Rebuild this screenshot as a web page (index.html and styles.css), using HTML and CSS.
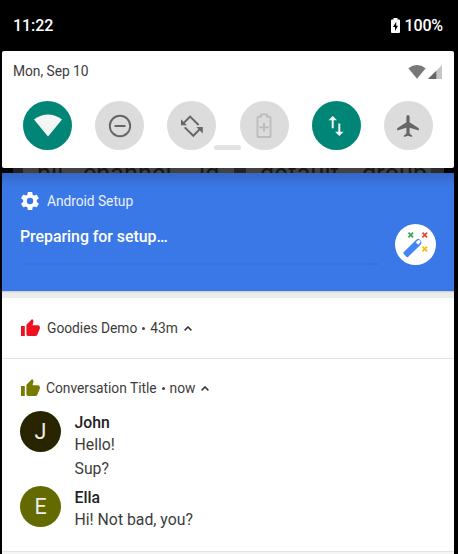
FILE: index.html
```html
<!DOCTYPE html>
<html lang="en">
<head>
<meta charset="utf-8">
<title>Notifications</title>
<link rel="stylesheet" href="styles.css">
</head>
<body>
<header class="status">
  <span class="clock">11:22</span>
  <span class="battery">
    <svg width="9" height="15" viewBox="0 0 9 15"><path fill="#fff" fill-rule="evenodd" d="M2.500 0h4v1.500H8q1 0 1 1V14q0 1-1 1H1q-1 0-1-1V2.500q0-1 1-1h1.500zM5.200 3.800 2 9h2v4l3-5.300H5.200z"/></svg>
    <span>100%</span>
  </span>
</header>
<section class="quick">
  <div class="quick-head">
    <span class="date">Mon, Sep 10</span>
    <span class="signals">
      <svg width="18" height="14" viewBox="0 0 18 14"><path fill="#777" d="M.3 3.300Q9-3.200 17.700 3.300L9 13.700z"/></svg>
      <svg width="14" height="14" viewBox="0 0 14 14"><path fill="#c6c6c6" d="M14 0v14H0z"/><path fill="#666" d="M8.300 5.700V14H0z"/></svg>
    </span>
  </div>
  <div class="tiles">
    <div class="tile on"><svg width="28" height="23" viewBox="0 0 28 23"><path fill="#f5f5f5" d="M0 5.500Q14-4.500 28 5.500L14 22.500z"/></svg></div>
    <div class="tile"><svg width="24" height="24" viewBox="0 0 24 24"><circle cx="12" cy="12" r="10.200" fill="none" stroke="#666" stroke-width="1.900"/><path fill="#666" d="M6.500 11h11v2h-11z"/></svg></div>
    <div class="tile"><svg width="24" height="24" viewBox="0 0 24 24"><g fill="none" stroke="#666" stroke-width="2"><path d="M18.600 11 10.100 2.600 3.800 8.900M4.700 13.400l8.600 8.400 6.500-6.700"/></g><path fill="#666" d="M1 5.200v6h6zM22.800 19.500v-6.500h-6.500z"/></svg></div>
    <div class="tile dim"><svg width="16" height="26" viewBox="0 0 16 26"><path fill="none" stroke="#bdbdbd" stroke-width="1.900" d="M5 1.500h6v2.200h2.500q1 0 1 1V23q0 1-1 1h-11q-1 0-1-1V4.700q0-1 1-1H5z"/><path fill="#bdbdbd" d="M7 9.800h2v3.500h3.500v2H9v3.400H7v-3.400H3.500v-2H7z"/></svg></div>
    <div class="tile on"><svg width="16" height="20" viewBox="0 0 16 20"><path fill="#f5f5f5" d="M4.700 0 9 4.300H5.700v7.900h-2V4.300H.5zM10.300 7.500h2v8.200h3.300L11.300 20 7 15.700h3.300z"/></svg></div>
    <div class="tile"><svg width="24" height="24" viewBox="0 0 24 24"><path fill="#666" d="M10.400 8.300V2.700a1.600 1.600 0 0 1 3.200 0v5.600l9.200 6v2.200l-9.200-2.800v5.800l2.500 1.900V23L12 21.800 7.900 23v-1.600l2.500-1.900v-5.800l-9.200 2.800v-2.200z"/></svg></div>
  </div>
  <div class="handle"></div>
</section>
<div class="peek"><span>nll_</span><span>channel_</span><span>id</span><span>default_</span><span>group</span></div>
<section class="setup">
  <div class="setup-text">
    <div class="setup-app"><svg width="20" height="20" viewBox="1 1 22 22"><path fill="#fff" d="M19.430 12.980c.04-.32.070-.64.070-.98s-.03-.66-.070-.98l2.110-1.650c.19-.15.240-.42.120-.64l-2-3.460c-.12-.22-.39-.3-.61-.22l-2.490 1c-.52-.4-1.080-.73-1.690-.98l-.38-2.650C14.460 2.180 14.250 2 14 2h-4c-.25 0-.46.180-.49.420l-.38 2.650c-.61.250-1.170.59-1.690.98l-2.490-1c-.23-.09-.49 0-.61.220l-2 3.460c-.13.220-.07.49.120.64l2.110 1.650c-.04.320-.07.650-.07.980s.03.660.070.980l-2.110 1.650c-.19.150-.24.420-.12.640l2 3.460c.12.220.39.3.61.220l2.490-1c.52.4 1.080.73 1.690.98l.38 2.650c.03.240.24.420.49.420h4c.25 0 .46-.18.490-.42l.38-2.650c.61-.25 1.170-.59 1.690-.98l2.490 1c.23.090.49 0 .61-.22l2-3.460c.12-.22.070-.49-.12-.64zM12 15.500A3.500 3.500 0 1 1 12 8.500a3.500 3.500 0 0 1 0 7z"/></svg><span>Android Setup</span></div>
    <div class="setup-title">Preparing for setup…</div>
    <div class="progress"><i></i></div>
  </div>
  <div class="wand"><svg width="41" height="41" viewBox="0 0 41 41"><path fill="#4285f4" fill-rule="evenodd" d="M8.600 28.300 20.500 16.400q2.300-2.400 4.700-.6 2.300 2.400.4 4.900L13 33q-.7.500-1.400 0l-3-3.300q-.6-.7 0-1.400zM23 16.200l-2.200 2 2.300 2.600 2.300-2.400q.6-.9-.1-1.700-1.100-1-2.300-.5z"/><g fill="none" stroke-width="1.700"><path stroke="#34a853" d="m13.500 8.700 4.600 4.600m0-4.600-4.600 4.600"/><path stroke="#ea4335" d="m27.500 8.700 4.600 4.600m0-4.600-4.600 4.600"/><path stroke="#fbbc05" d="m27.500 22.700 4.600 4.600m0-4.600-4.600 4.600"/></g></svg></div>
</section>
<div class="gap"></div>
<section class="note goodies">
  <div class="note-head"><svg class="red" width="19" height="17" viewBox="0 0 19 17"><path d="M0 7h3.800v10H0zM18.900 8.200q0-2-2-2h-5.300l.9-3.700q.1-.9-.5-1.500L11.100 0 5.900 5.300q-.5.500-.5 1.200v8.700q0 1.800 1.800 1.800h7.300q1.200 0 1.700-1.100l2.500-5.900q.2-.3.200-.7z"/></svg><span class="app">Goodies Demo</span><span class="dot"></span><span class="time">43m</span><svg class="chev" width="8" height="5" viewBox="0 0 8 5"><path d="m.6 4.400 3.400-3.400 3.400 3.400"/></svg></div>
</section>
<section class="note chat">
  <div class="note-head"><svg class="olive" width="19" height="17" viewBox="0 0 19 17"><path d="M0 7h3.800v10H0zM18.900 8.200q0-2-2-2h-5.300l.9-3.700q.1-.9-.5-1.500L11.100 0 5.900 5.300q-.5.500-.5 1.200v8.700q0 1.800 1.800 1.800h7.300q1.200 0 1.700-1.100l2.500-5.900q.2-.3.200-.7z"/></svg><span class="app">Conversation Title</span><span class="dot"></span><span class="time">now</span><svg class="chev" width="8" height="5" viewBox="0 0 8 5"><path d="m.6 4.400 3.400-3.400 3.400 3.400"/></svg></div>
  <div class="msg john"><div class="avatar">J</div><div class="lines"><b>John</b><p>Hello!</p><p class="next">Sup?</p></div></div>
  <div class="msg ella"><div class="avatar">E</div><div class="lines"><b>Ella</b><p>Hi! Not bad, you?</p></div></div>
</section>
<div class="tail"></div>
</body>
</html>
```
FILE: styles.css
```css
* { box-sizing: border-box; }
body { margin: 0; padding: 0 4px 0 2px; width: 458px; height: 554px; overflow: hidden; background: #000; font-family: Roboto, sans-serif; font-size: 13.8px; color: #3c3c3c; }
svg { display: block; flex: none; }
.status { height: 51px; padding: 0 11px 1px; display: flex; justify-content: space-between; align-items: center; color: #fff; font-size: 16px; font-weight: 500; }
.clock { letter-spacing: -0.05px; }
.battery { display: flex; align-items: center; gap: 5px; letter-spacing: -0.15px; }
.quick { position: relative; height: 117px; background: #fff; border-radius: 2px; }
.quick-head { height: 39px; padding: 0 12px 0 11px; display: flex; justify-content: space-between; align-items: center; }
.date { letter-spacing: -0.03px; }
.signals { display: flex; gap: 2px; padding-top: 3px; }
.tiles { display: flex; justify-content: space-between; padding: 11px 21px 0; }
.tile { width: 49px; height: 49px; border-radius: 50%; background: #dcdcdc; display: flex; align-items: center; justify-content: center; }
.tile.on { background: #008577; }
.handle { position: absolute; left: 212px; top: 94px; width: 27px; height: 5px; border-radius: 3px; background: #e3e3e3; }
.peek { height: 5px; margin: 0 10px 0 11px; padding-left: 24px; background: linear-gradient(90deg, #222 10px, #424242 10px 221px, #242424 221px 233px, #424242 233px 418px, #2c2c2c 418px); overflow: hidden; display: grid; grid-template-columns: 46px 116px 61px 102px 60px; color: #161616; font-size: 25px; line-height: 12px; letter-spacing: 0.2px; white-space: nowrap; }
.setup { height: 118px; display: flex; justify-content: space-between; padding: 16px 18px 0; background: linear-gradient(#3367c5, #3b78e7 14px); color: #fff; }
.setup-text { width: 358px; }
.setup-app { display: flex; align-items: center; gap: 7px; height: 24px; color: #e8effd; letter-spacing: -0.05px; }
.setup-title { margin-top: 14px; font-size: 15.900px; line-height: 20px; font-weight: 500; letter-spacing: -0.03px; }
.progress { height: 2px; margin-top: 16px; background: #3975e2; display: flex; justify-content: flex-end; }
.progress i { width: 11px; background: #3770d9; }
.wand { width: 41px; height: 41px; margin-top: 35px; border-radius: 50%; background: #fff; }
.gap { height: 7px; background: linear-gradient(#c9c9c9, #ececec 2px); }
.note { background: #fff; padding-left: 18px; }
.goodies { height: 61px; padding-top: 20px; border-bottom: 1px solid #e2e2e2; }
.note-head { display: flex; align-items: center; height: 20px; }
.note-head svg:first-child { margin: -1px 0 0 1px; }
.red { fill: #ee1122; }
.olive { fill: #777b00; }
.app { margin-left: 7px; letter-spacing: -0.02px; }
.chat .app { margin-left: 6px; }
.dot { width: 3px; height: 3px; border-radius: 50%; background: #444; margin: 0 5px; }
.chev { margin-left: 6px; fill: none; stroke: #333; stroke-width: 1.500; }
.chat { height: 192px; padding-top: 19px; }
.msg { display: flex; gap: 13.500px; font-size: 15.800px; line-height: 22px; }
.avatar { width: 41px; height: 41px; border-radius: 50%; display: flex; align-items: center; justify-content: center; color: #eee; font-size: 21.500px; }
.john { margin-top: 13px; height: 75px; }
.john .avatar { background: #292400; }
.ella .avatar { background: #636b00; }
.lines { padding-top: 1px; }
.lines b { display: block; font-weight: 500; color: #222; }
.lines p { margin: 0; }
.lines .next { margin-top: 2px; }
.tail { height: 3px; background: linear-gradient(#e3e3e3 1px, #f5f5f5 1px); }
```
